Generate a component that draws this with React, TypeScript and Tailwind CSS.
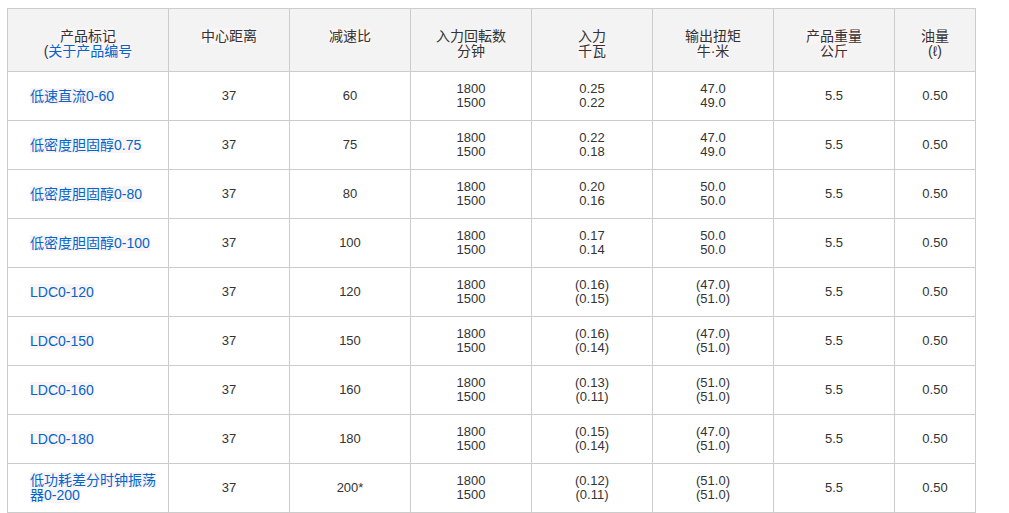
const rows = [
  { name: '低速直流0-60', ratio: '60', kw: ['0.25', '0.22'], nm: ['47.0', '49.0'] },
  { name: '低密度胆固醇0.75', ratio: '75', kw: ['0.22', '0.18'], nm: ['47.0', '49.0'] },
  { name: '低密度胆固醇0-80', ratio: '80', kw: ['0.20', '0.16'], nm: ['50.0', '50.0'] },
  { name: '低密度胆固醇0-100', ratio: '100', kw: ['0.17', '0.14'], nm: ['50.0', '50.0'] },
  { name: 'LDC0-120', ratio: '120', kw: ['(0.16)', '(0.15)'], nm: ['(47.0)', '(51.0)'] },
  { name: 'LDC0-150', ratio: '150', kw: ['(0.16)', '(0.14)'], nm: ['(47.0)', '(51.0)'] },
  { name: 'LDC0-160', ratio: '160', kw: ['(0.13)', '(0.11)'], nm: ['(51.0)', '(51.0)'] },
  { name: 'LDC0-180', ratio: '180', kw: ['(0.15)', '(0.14)'], nm: ['(47.0)', '(51.0)'] },
  { name: '低功耗差分时钟振荡器0-200', ratio: '200*', kw: ['(0.12)', '(0.11)'], nm: ['(51.0)', '(51.0)'] },
]

const hl = 'bg-[#faf4f4]'
const th = 'border border-[#cccccc] bg-[#f4f3f3] text-center align-middle font-normal text-[14px] leading-[15px] px-2 pt-[8px]'
const td = 'border border-[#cccccc] text-center align-middle text-[13px] leading-[14px]'

function Two({ v }: { v: string[] }) {
  return (
    <>
      {v[0]}
      <br />
      {v[1]}
    </>
  )
}

export default function App() {
  return (
    <div
      className="bg-white pt-[8px] pl-[7px] text-[#333333]"
      style={{ fontFamily: '"Liberation Sans", "Noto Sans CJK SC", sans-serif' }}
    >
      <table className="border-collapse table-fixed w-[968px]">
        <colgroup>
          <col className="w-[161px]" />
          <col className="w-[121px]" />
          <col className="w-[121px]" />
          <col className="w-[121px]" />
          <col className="w-[121px]" />
          <col className="w-[121px]" />
          <col className="w-[121px]" />
          <col className="w-[81px]" />
        </colgroup>
        <thead>
          <tr className="h-[63px]">
            <th className={th}>
              <span className={hl}>产品标记</span>
              <br />
              <span className={hl}>
                (<span className="text-[#0066cc]">关于产品编号</span>
              </span>
            </th>
            <th className={th}>
              <span className={hl}>中心距离</span>
              <br />
              <span>&nbsp;</span>
            </th>
            <th className={th}>
              <span className={hl}>减速比</span>
              <br />
              <span>&nbsp;</span>
            </th>
            <th className={th}>
              入力回転数
              <br />
              <span className={hl}>分钟</span>
            </th>
            <th className={th}>
              入力
              <br />
              <span className={hl}>千瓦</span>
            </th>
            <th className={th}>
              输出扭矩
              <br />
              <span className={hl}>牛·米</span>
            </th>
            <th className={th}>
              <span className={hl}>产品重量</span>
              <br />
              <span className={hl}>公斤</span>
            </th>
            <th className={th}>
              <span className={hl}>油量</span>
              <br />
              <span className={hl}>(ℓ)</span>
            </th>
          </tr>
        </thead>
        <tbody>
          {rows.map((r, i) => (
            <tr key={i} className="h-[49px]">
              <td className="border border-[#cccccc] align-middle text-left pl-[22px] pr-2 text-[14px] leading-[15px]">
                <span className={`${hl} text-[#0066cc]`}>{r.name}</span>
              </td>
              <td className={td}>37</td>
              <td className={td}>{r.ratio}</td>
              <td className={td}>
                <Two v={['1800', '1500']} />
              </td>
              <td className={td}>
                <Two v={r.kw} />
              </td>
              <td className={td}>
                <Two v={r.nm} />
              </td>
              <td className={td}>5.5</td>
              <td className={td}>0.50</td>
            </tr>
          ))}
        </tbody>
      </table>
    </div>
  )
}
